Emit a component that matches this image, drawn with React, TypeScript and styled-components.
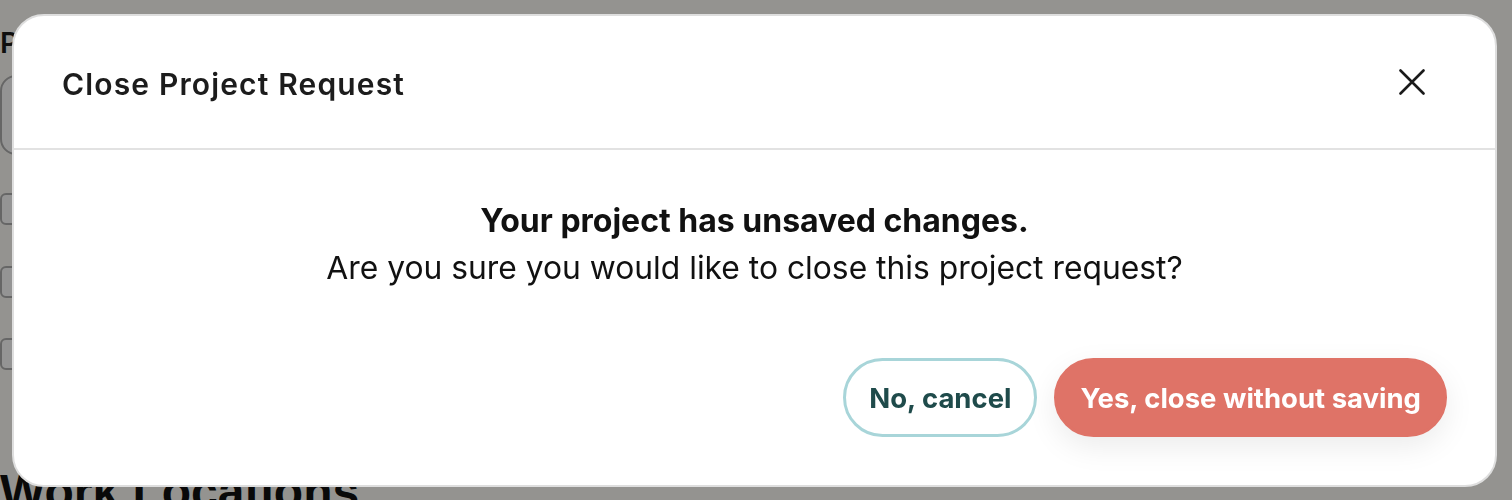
import React from 'react';
import styled, { createGlobalStyle } from 'styled-components';

const GlobalStyle = createGlobalStyle`
  html, body {
    margin: 0;
    padding: 0;
  }
  body {
    background: #fffef8;
    font-family: Inter, 'Noto Sans', sans-serif;
    overflow: hidden;
  }
`;

// page that sits behind the dialog
const Page = styled.div`
  height: 500px;
  padding-top: 26px;
  box-sizing: border-box;
  color: #1a1a1a;
`;

const FieldLabel = styled.div`
  font-size: 29px;
  font-weight: 600;
  line-height: 34px;
`;

const TextArea = styled.div`
  margin-top: 15px;
  width: 600px;
  height: 80px;
  box-sizing: border-box;
  border: 2px solid #b0b0b0;
  border-radius: 16px;
  background: #fff;
`;

const OptionList = styled.div`
  margin-top: 38px;
  display: flex;
  flex-direction: column;
  gap: 40.5px;
`;

const OptionRow = styled.label`
  display: flex;
  align-items: center;
  gap: 12px;
  font-size: 20px;
`;

const CheckBox = styled.span`
  width: 32px;
  height: 32px;
  box-sizing: border-box;
  border: 2px solid #b0b0b0;
  border-radius: 6px;
  background: #fff;
`;

const SectionTitle = styled.h2`
  margin: 94px 0 0;
  font-family: 'Liberation Sans', Arial, sans-serif;
  font-size: 48px;
  font-weight: 700;
  color: #111;
`;

// dialog
const Overlay = styled.div`
  position: fixed;
  inset: 0;
  display: flex;
  align-items: flex-start;
  padding: 14px 15px 0 12px;
  background: rgba(0, 0, 0, 0.42);
`;

const Modal = styled.div`
  flex: 1;
  height: 473px;
  box-sizing: border-box;
  display: flex;
  flex-direction: column;
  background: #fff;
  border: 2px solid #dedede;
  border-radius: 32px;
  overflow: hidden;
`;

const Header = styled.div`
  height: 134px;
  box-sizing: border-box;
  display: flex;
  align-items: center;
  justify-content: space-between;
  padding: 0 59px 0 48px;
  border-bottom: 2px solid #e2e2e2;
`;

const Title = styled.h1`
  margin: 0;
  padding-top: 3px;
  font-family: Inter, sans-serif;
  font-size: 30px;
  font-weight: 600;
  letter-spacing: 1.15px;
  color: #1c1c1c;
`;

const CloseButton = styled.button`
  width: 48px;
  height: 48px;
  display: flex;
  align-items: center;
  justify-content: center;
  padding: 0;
  border: none;
  background: none;
  cursor: pointer;
`;

const Body = styled.div`
  flex: 1;
  display: flex;
  flex-direction: column;
  padding: 0 48px 48px;
`;

const Message = styled.div`
  margin-top: 47px;
  text-align: center;
  font-family: Inter, sans-serif;
  font-size: 32px;
  line-height: 47px;
  color: #111;
`;

const Lead = styled.p`
  margin: 0;
  font-weight: 700;
`;

const Question = styled.p`
  margin: 0;
  font-size: 31.8px;
`;

const Actions = styled.div`
  margin-top: auto;
  display: flex;
  justify-content: flex-end;
  gap: 17px;
`;

const PillButton = styled.button<{ $primary?: boolean }>`
  height: 79px;
  box-sizing: border-box;
  padding: 0 23px;
  border-radius: 40px;
  border: 3px solid ${(p) => (p.$primary ? '#df7367' : '#a8d5d9')};
  background: ${(p) => (p.$primary ? '#df7367' : '#fff')};
  color: ${(p) => (p.$primary ? '#fff' : '#1f4b4b')};
  box-shadow: ${(p) => (p.$primary ? '0 10px 30px rgba(0, 0, 0, 0.08)' : 'none')};
  font-family: Inter, sans-serif;
  font-size: 27.5px;
  font-weight: 700;
  cursor: pointer;
`;

const CloseIcon = () => (
  <svg width="26" height="26" viewBox="0 0 26 26" fill="none">
    <path d="M1.5 1.5L24.5 24.5M24.5 1.5L1.5 24.5" stroke="#1a1a1a" strokeWidth="2.6" strokeLinecap="round" />
  </svg>
);

const App = () => (
  <>
    <GlobalStyle />
    <Page>
      <FieldLabel>Project Name</FieldLabel>
      <TextArea />
      <OptionList>
        {['Remote', 'Hybrid', 'On-site'].map((name) => (
          <OptionRow key={name}>
            <CheckBox />
            {name}
          </OptionRow>
        ))}
      </OptionList>
      <SectionTitle>Work Locations</SectionTitle>
    </Page>
    <Overlay>
      <Modal>
        <Header>
          <Title>Close Project Request</Title>
          <CloseButton aria-label="Close">
            <CloseIcon />
          </CloseButton>
        </Header>
        <Body>
          <Message>
            <Lead>Your project has unsaved changes.</Lead>
            <Question>Are you sure you would like to close this project request?</Question>
          </Message>
          <Actions>
            <PillButton>No, cancel</PillButton>
            <PillButton $primary>Yes, close without saving</PillButton>
          </Actions>
        </Body>
      </Modal>
    </Overlay>
  </>
);

export default App;
